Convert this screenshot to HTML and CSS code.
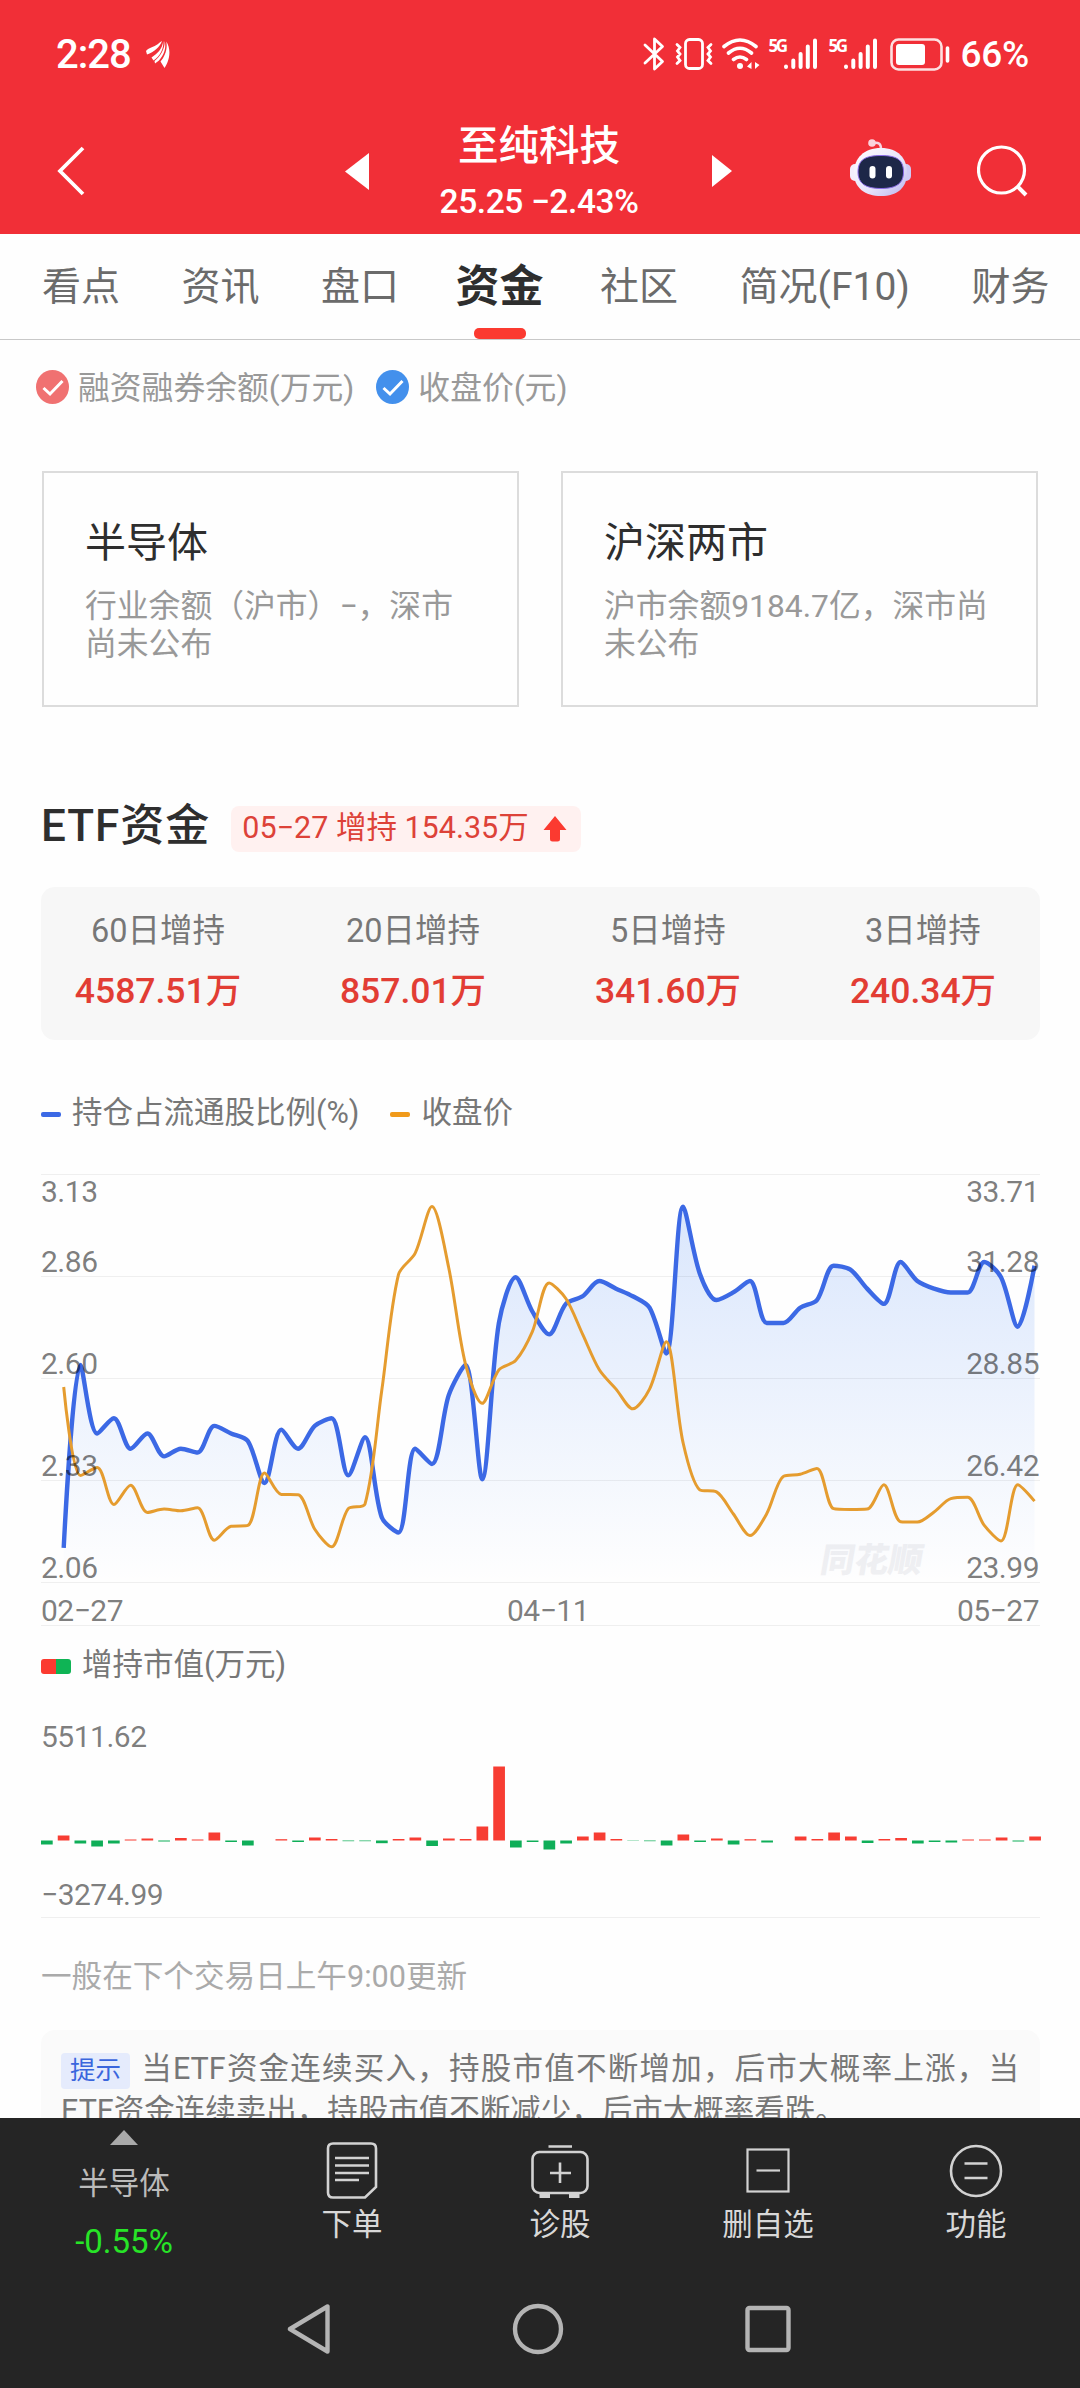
FILE: index.html
```
<!DOCTYPE html>
<html lang="zh-CN">
<head>
    <meta charset="UTF-8">
    <title>至纯科技 - 资金</title>
    <meta name="viewport" content="width=device-width, initial-scale=1.0">
    <link rel="stylesheet" href="styles.css">
</head>
<body>
    <div class="app">
        <header class="header">
            <!-- 系统状态栏 -->
            <div class="status-bar">
                <span class="time">2:28</span>
                <svg class="feather" width="24" height="29" viewBox="0 0 24 29" fill="#fff">
                    <path d="M0 11C2 8 8 7 12 4Q14 2 16 1C14 7 8 12 1 14.500Z"/>
                    <path d="M17.200 1C16.500 9 11 14 5.500 17.500L7.500 20.500C14 16 18 9 17.200 1Z"/>
                    <path d="M18.700 1C19 9 14 17 8.500 21L9 23.500L13 20.500C18 15 20.500 8 18.700 1Z"/>
                    <path d="M20.200 1.500C22 9 18.500 17 14.500 21.500L18.500 28C23 22 26 10 20.200 1.500Z"/>
                </svg>
                <div class="status-icons">
                    <svg width="22" height="34" viewBox="0 0 22 34" fill="none" stroke="#fff" stroke-width="2.800" stroke-linejoin="round" stroke-linecap="round">
                        <path d="M2 8L19.500 24.500L11.500 32V2L19.500 9.500L2 26"/>
                    </svg>
                    <svg class="vibrate" width="38" height="32" viewBox="0 0 38 32" fill="none" stroke="#fff" stroke-width="2.800" stroke-linecap="round">
                        <rect x="10.500" y="1.500" width="17" height="29" rx="4"/>
                        <path d="M2 6.500L5 9.500L2.500 13L5 16L2.500 19L5 22.500L2 25.500M36 6.500L33 9.500L35.500 13L33 16L35.500 19L33 22.500L36 25.500"/>
                    </svg>
                    <svg class="wifi" width="38" height="32" viewBox="0 0 38 32" fill="none" stroke="#fff" stroke-width="3.600" stroke-linecap="round">
                        <path d="M2 8.500Q18 -4.500 34 8.500M6.500 15Q18 5.500 29.500 15M11.500 21.500Q18 16.500 24.500 21.500"/>
                        <circle cx="18" cy="28" r="3" fill="#fff" stroke="none"/>
                        <path d="M29.500 24V31L25 28.500ZM33 24V31L37.500 27Z" fill="#fff" stroke="none"/>
                    </svg>
                    <span class="net">5G</span>
                    <svg class="signal" width="34" height="32" viewBox="0 0 34 32" stroke="#fff" stroke-width="4" stroke-linecap="round">
                        <path d="M2 28.500V29M9.300 22.500V29M16.600 16V29M23.800 8.500V29M31 2.500V29"/>
                    </svg>
                    <span class="net net2">5G</span>
                    <svg class="signal" width="34" height="32" viewBox="0 0 34 32" stroke="#fff" stroke-width="4" stroke-linecap="round">
                        <path d="M2 28.500V29M9.300 22.500V29M16.600 16V29M23.800 8.500V29M31 2.500V29"/>
                    </svg>
                    <svg class="battery" width="60" height="33" viewBox="0 0 60 33" fill="none" stroke="#fff">
                        <rect x="1.500" y="1.500" width="50" height="30" rx="7" stroke-width="2.600" opacity=".85"/>
                        <rect x="6" y="6" width="29" height="21" rx="3" fill="#fff" stroke="none"/>
                        <path d="M57.500 10V23" stroke-width="3.600" stroke-linecap="round"/>
                    </svg>
                    <span class="percent">66%</span>
                </div>
            </div>

            <!-- 股票标题栏 -->
            <div class="title-bar">
                <svg class="back" width="28" height="50" viewBox="0 0 28 50" fill="none" stroke="#fff" stroke-width="3.800">
                    <path d="M26 2L3 25L26 48"/>
                </svg>
                <svg class="prev" width="24" height="37" viewBox="0 0 24 37" fill="#fff"><path d="M24 0V37L0 18.500Z"/></svg>
                <div class="stock">
                    <div class="stock-name">至纯科技</div>
                    <div class="stock-price">25.25 −2.43%</div>
                </div>
                <svg class="next" width="20" height="32" viewBox="0 0 20 32" fill="#fff"><path d="M0 0V32L20 16Z"/></svg>
                <svg class="robot" width="62" height="58" viewBox="0 0 62 58">
                    <defs>
                        <linearGradient id="head" x1="0" y1="0" x2="1" y2="1">
                            <stop offset="0" stop-color="#fff"/>
                            <stop offset=".6" stop-color="#e6e2fa"/>
                            <stop offset="1" stop-color="#b9b4ee"/>
                        </linearGradient>
                    </defs>
                    <path d="M23 4C29 3 31 5 31 10" fill="none" stroke="#f6d5e2" stroke-width="2.500"/>
                    <circle cx="22" cy="4" r="3.800" fill="#fbd3dc"/>
                    <rect x="0" y="25" width="12" height="17" rx="5" fill="#f3eefc"/>
                    <rect x="49" y="25" width="12" height="17" rx="5" fill="#cfcaf5"/>
                    <path d="M31 9C48 9 57 19 57 34C57 49 47 57 31 57C15 57 4 49 4 34C4 19 14 9 31 9Z" fill="url(#head)"/>
                    <path d="M31 16.500C47 16.500 53.500 21 53.500 33C53.500 44 47 49.500 31 49.500C15 49.500 8 44 8 33C8 21 15 16.500 31 16.500Z" fill="#1d2748" stroke="#8a6be8" stroke-width="1"/>
                    <rect x="19.500" y="27" width="6" height="12.500" rx="3" fill="#fff"/>
                    <rect x="36" y="27" width="6" height="12.500" rx="3" fill="#fff"/>
                </svg>
                <svg class="search" width="52" height="52" viewBox="0 0 52 52" fill="none" stroke="#fff" stroke-width="3.200">
                    <circle cx="24.500" cy="25" r="23"/>
                    <path d="M40 41L49 50" stroke-width="4"/>
                </svg>
            </div>
        </header>

        <nav class="tabs">
            <div class="tab">看点</div>
            <div class="tab">资讯</div>
            <div class="tab">盘口</div>
            <div class="tab active">资金</div>
            <div class="tab">社区</div>
            <div class="tab">简况(F10)</div>
            <div class="tab">财务</div>
        </nav>

        <main class="content">
            <div class="check-legend">
                <svg width="33" height="34" viewBox="0 0 33 34"><ellipse cx="16.500" cy="17" rx="16.500" ry="17" fill="#f07171"/><path d="M7.500 18L14 24L26.500 11" fill="none" stroke="#fff" stroke-width="3"/></svg>
                <span>融资融券余额(万元)</span>
                <svg width="33" height="34" viewBox="0 0 33 34"><ellipse cx="16.500" cy="17" rx="16.500" ry="17" fill="#4390ec"/><path d="M7.500 18L14 24L26.500 11" fill="none" stroke="#fff" stroke-width="3"/></svg>
                <span>收盘价(元)</span>
            </div>

            <div class="cards">
                <div class="card">
                    <h3>半导体</h3>
                    <p>行业余额（沪市）−，深市尚未公布</p>
                </div>
                <div class="card">
                    <h3>沪深两市</h3>
                    <p>沪市余额9184.7亿，深市尚未公布</p>
                </div>
            </div>

            <!-- ETF资金 -->
            <div class="section-title">
                <h2>ETF资金</h2>
                <div class="badge">
                    <span>05−27 增持 154.35万</span>
                    <svg width="24" height="26" viewBox="0 0 24 26" fill="#fb3a30"><path d="M12 0L23.500 14H17V23Q17 25.500 14.500 25.500H9.500Q7 25.500 7 23V14H0.500Z"/></svg>
                </div>
            </div>

            <div class="summary">
                <div class="summary-item"><span>60日增持</span><b>4587.51万</b></div>
                <div class="summary-item"><span>20日增持</span><b>857.01万</b></div>
                <div class="summary-item"><span>5日增持</span><b>341.60万</b></div>
                <div class="summary-item"><span>3日增持</span><b>240.34万</b></div>
            </div>

            <div class="line-legend">
                <i class="dash blue"></i><span>持仓占流通股比例(%)</span>
                <i class="dash orange"></i><span>收盘价</span>
            </div>

            <svg class="line-chart" width="1080" height="480" viewBox="0 0 1080 480">
                <defs>
                    <linearGradient id="area" gradientUnits="userSpaceOnUse" x1="0" y1="55" x2="0" y2="432">
                        <stop offset="0" stop-color="#3f80f5" stop-opacity=".19"/>
                        <stop offset="1" stop-color="#3f80f5" stop-opacity="0"/>
                    </linearGradient>
                </defs>
                <text class="watermark" transform="translate(819 422) skewX(-10)">同花顺</text>
                <path id="ratio-area" fill="url(#area)"/>
                <path class="grid" d="M41 24.500H1040M41 126.500H1040M41 228.500H1040M41 330.500H1040M41 432.500H1040M41 475.500H1040"/>
                <path id="ratio-line" fill="none" stroke="#3c69e5" stroke-width="4.400" stroke-linejoin="bevel"/>
                <path id="price-line" fill="none" stroke="#e59c2f" stroke-width="3" stroke-linejoin="bevel"/>
                <g class="axis">
                    <text x="41" y="52">3.13</text>
                    <text x="41" y="122">2.86</text>
                    <text x="41" y="224">2.60</text>
                    <text x="41" y="326">2.33</text>
                    <text x="41" y="428">2.06</text>
                    <text x="41" y="471">02−27</text>
                </g>
                <g class="axis" text-anchor="end">
                    <text x="1039" y="52">33.71</text>
                    <text x="1039" y="122">31.28</text>
                    <text x="1039" y="224">28.85</text>
                    <text x="1039" y="326">26.42</text>
                    <text x="1039" y="428">23.99</text>
                    <text x="1039" y="471">05−27</text>
                </g>
                <text class="axis" x="548" y="471" text-anchor="middle">04−11</text>
            </svg>

            <div class="line-legend value-legend">
                <i class="box"></i><span>增持市值(万元)</span>
            </div>

            <svg class="bar-chart" width="1080" height="220" viewBox="0 0 1080 220">
                <g id="bars"></g>
                <path class="grid" d="M41 217.500H1040"/>
                <text class="axis" x="41" y="47">5511.62</text>
                <text class="axis" x="41" y="205">−3274.99</text>
            </svg>

            <p class="note">一般在下个交易日上午9:00更新</p>

            <div class="tip"><span class="tip-tag">提示</span>当ETF资金连续买入，持股市值不断增加，后市大概率上涨，当ETF资金连续卖出，持股市值不断减少，后市大概率看跌。</div>
        </main>

        <footer class="footer">
            <div class="toolbar">
                <div class="sector">
                    <svg width="28" height="15" viewBox="0 0 28 15" fill="#aaa"><path d="M14 0L28 15H0Z"/></svg>
                    <span>半导体</span>
                    <em>-0.55%</em>
                </div>
                <div class="tool">
                    <svg width="60" height="60" viewBox="0 0 60 60" fill="none" stroke="#d2d2d2" stroke-width="2.600">
                        <path d="M11 3.500H49Q54 3.500 54 8.500V47L43 57.500H11Q6 57.500 6 52.500V8.500Q6 3.500 11 3.500Z"/>
                        <path d="M13 18H47M13 25.500H47M13 33H47M13 40H37"/>
                    </svg>
                    <span>下单</span>
                </div>
                <div class="tool">
                    <svg width="60" height="60" viewBox="0 0 60 60" fill="none" stroke="#d2d2d2" stroke-width="2.600">
                        <rect x="2.500" y="12" width="55" height="41" rx="7"/>
                        <path d="M18.500 6.500H42M30 22.500V43M20 33H41"/>
                        <path d="M9.500 56H20M39 56H49.500" stroke-width="4"/>
                    </svg>
                    <span>诊股</span>
                </div>
                <div class="tool">
                    <svg width="60" height="60" viewBox="0 0 60 60" fill="none" stroke="#d2d2d2" stroke-width="2.200">
                        <rect x="9.500" y="9.500" width="41" height="42"/>
                        <path d="M18.500 30.500H42"/>
                    </svg>
                    <span>删自选</span>
                </div>
                <div class="tool">
                    <svg width="60" height="60" viewBox="0 0 60 60" fill="none" stroke="#d2d2d2" stroke-width="2.600">
                        <circle cx="30" cy="31" r="25"/>
                        <path d="M18.500 23.500H41.500M18.500 38H41.500"/>
                    </svg>
                    <span>功能</span>
                </div>
            </div>

            <!-- 系统导航键 -->
            <div class="nav-keys">
                <svg width="44" height="52" viewBox="0 0 44 52" fill="none" stroke="#b4b4b4" stroke-width="4.400" stroke-linejoin="round"><path d="M40.500 3.500V48.500L3 26Z"/></svg>
                <svg width="52" height="52" viewBox="0 0 52 52" fill="none" stroke="#b4b4b4" stroke-width="4.400"><circle cx="26" cy="26" r="23"/></svg>
                <svg width="46" height="48" viewBox="0 0 46 48" fill="none" stroke="#b4b4b4" stroke-width="4.400"><rect x="2.500" y="3" width="41" height="42" rx="2"/></svg>
            </div>
        </footer>
    </div>

    <script>
        // 持仓占流通股比例(%)
        const ratio = [2.15, 2.63, 2.45, 2.49, 2.41, 2.45, 2.39, 2.41, 2.40, 2.47, 2.45, 2.43, 2.32, 2.46, 2.41,
            2.47, 2.49, 2.34, 2.44, 2.23, 2.19, 2.41, 2.37, 2.55, 2.63, 2.33, 2.74, 2.86, 2.77, 2.71,
            2.79, 2.81, 2.85, 2.83, 2.81, 2.78, 2.66, 3.045, 2.87, 2.80, 2.82, 2.85, 2.74, 2.74, 2.78,
            2.80, 2.89, 2.88, 2.83, 2.79, 2.90, 2.85, 2.83, 2.82, 2.82, 2.90, 2.86, 2.73, 2.89];
        // 收盘价
        const price = [28.64, 26.53, 26.72, 25.84, 26.30, 25.65, 25.73, 25.69, 25.76, 24.99, 25.32, 25.34, 26.59, 26.08, 26.07,
            25.25, 24.83, 25.74, 25.85, 28.55, 31.32, 31.83, 32.94, 31.49, 29.19, 28.25, 29.05, 29.27, 29.96, 31.12,
            30.75, 29.90, 29.05, 28.59, 28.12, 28.59, 29.72, 27.32, 26.19, 26.14, 25.62, 25.10, 25.62, 26.51, 26.56,
            26.70, 25.74, 25.72, 25.73, 26.31, 25.43, 25.42, 25.66, 25.98, 26.01, 25.34, 24.97, 26.31, 25.92];
        // 增持市值柱高
        const values = [-4, 5, -3, -6, -3, 1, 2, -1, 2.5, 1, 8, -1.5, -5, 0, 1.3, -1.5, 3, 1.5, -0.7, -0.7,
            -2.7, 1.5, 3, -5.5, 2, 1.5, 14, 74, -7, -1.5, -9, -3, 4, 8, 1.5, -0.3, -0.7, -5, 6, -1.5,
            2, -4, 1.3, -2, 0, 4, 1.5, 8, 4, -2.5, 1.5, 2.5, -3, -1.5, -2, 1, 1, 3, -1, 4];

        function toPoints(data, min, max) {
            return data.map((v, i) => [63.7 + i * 16.738, 432.1 - (v - min) / (max - min) * 407.8]);
        }

        function clamp(v, a, b) {
            return Math.max(Math.min(a, b), Math.min(Math.max(a, b), v));
        }

        // 平滑曲线，控制点限制在相邻两点之间
        function smoothPath(pts) {
            let d = `M${pts[0]}`;
            let cp = pts[0];
            for (let i = 1; i < pts.length; i++) {
                const prev = pts[i - 1], p = pts[i], next = pts[i + 1];
                let before = p, after = p;
                if (next) {
                    const d0 = Math.hypot(p[0] - prev[0], p[1] - prev[1]);
                    const d1 = Math.hypot(next[0] - p[0], next[1] - p[1]);
                    const r = d1 / (d0 + d1);
                    after = p.map((v, k) => clamp(v + (next[k] - prev[k]) * 0.3 * r, v, next[k]));
                    before = p.map((v, k) => clamp(v - (after[k] - v) * d0 / d1, v, prev[k]));
                    after = p.map((v, k) => v + (v - before[k]) * d1 / d0);
                }
                d += `C${cp} ${before} ${p}`;
                cp = after;
            }
            return d;
        }

        const ratioPath = smoothPath(toPoints(ratio, 2.06, 3.13));
        document.getElementById('ratio-line').setAttribute('d', ratioPath);
        document.getElementById('ratio-area').setAttribute('d', ratioPath + 'V432H63.7Z');
        document.getElementById('price-line').setAttribute('d', smoothPath(toPoints(price, 23.99, 33.71)));

        document.getElementById('bars').innerHTML = values.map((v, i) => {
            const y = v > 0 ? 140.5 - v : 140.5;
            return `<rect x="${41 + i * 16.75}" y="${y}" width="11.7" height="${Math.abs(v)}" fill="${v > 0 ? '#f73d33' : '#0fae58'}"/>`;
        }).join('');
    </script>
</body>
</html>
```

FILE: styles.css
```
* {
    margin: 0;
    padding: 0;
    box-sizing: border-box;
}

body {
    width: 1080px;
    font-family: Roboto, 'Noto Sans CJK SC', sans-serif;
    background: #fefefe;
    color: #777;
}

svg {
    display: block;
    flex: none;
}

.app {
    height: 2388px;
    display: flex;
    flex-direction: column;
    overflow: hidden;
}

.header {
    background: #f12f37;
    color: white;
    height: 234px;
    flex: none;
}

.status-bar {
    height: 108px;
    display: flex;
    align-items: center;
    padding: 0 51px 0 56px;
}

.time {
    font-size: 40px;
    font-weight: 500;
    letter-spacing: -1px;
}

.feather {
    margin-left: 15px;
}

.status-icons {
    margin-left: auto;
    display: flex;
    align-items: center;
}

.vibrate {
    margin-left: 10px;
}

.wifi {
    margin-left: 9px;
}

.net {
    width: 16px;
    margin: -16px 0 0 9px;
    font-family: 'Open Sans', Roboto, sans-serif;
    font-size: 17px;
    font-weight: 700;
    line-height: 16px;
    letter-spacing: -2.5px;
    white-space: nowrap;
}

.net2 {
    margin-left: 11px;
}

.signal {
    margin-left: -1px;
}

.battery {
    margin-left: 12px;
}

.percent {
    margin-left: 11px;
    font-size: 37px;
    font-weight: 500;
    letter-spacing: -0.3px;
}

.title-bar {
    height: 126px;
    display: flex;
    align-items: center;
    padding: 0 51px 0 57px;
}

.back {
    margin-right: 260px;
}

.stock {
    flex: 1;
    padding-right: 3px;
    text-align: center;
    white-space: nowrap;
}

.stock-name {
    font-size: 40.5px;
    font-weight: 500;
    line-height: 56px;
}

.stock-price {
    font-size: 33.5px;
    font-weight: 500;
    line-height: 44px;
    margin-top: 6px;
    letter-spacing: -0.4px;
}

.robot {
    margin-left: 118px;
    margin-top: -6px;
}

.search {
    margin-left: 65px;
}

.tabs {
    height: 106px;
    flex: none;
    display: flex;
    gap: 61.5px;
    padding-left: 42px;
    border-bottom: 1px solid #c8c8c8;
    line-height: 107px;
    font-size: 39px;
    color: #6b6b6b;
    white-space: nowrap;
}

.tab.active {
    position: relative;
    margin: 0 -5px;
    font-size: 44px;
    font-weight: 700;
    color: #2e2e2e;
}

.tab.active::after {
    content: '';
    position: absolute;
    left: 18px;
    bottom: 0;
    width: 52px;
    height: 11px;
    border-radius: 5px;
    background: #fb3a30;
}

.content {
    flex: 1;
    min-height: 0;
    overflow: hidden;
}

.check-legend {
    margin: 30px 0 0 36px;
    height: 34px;
    display: flex;
    align-items: center;
    font-size: 31.8px;
    line-height: 34px;
    color: #999;
}

.check-legend span {
    margin: 2px 22px 0 9px;
}

.cards {
    margin: 67px 42px 0;
    display: grid;
    grid-template-columns: 1fr 1fr;
    gap: 42px;
}

.card {
    height: 236px;
    border: 2px solid #dcdcdc;
    padding: 41px 46px 0 41px;
}

.card h3 {
    font-size: 41px;
    font-weight: 400;
    line-height: 58px;
    color: #2e2e2e;
}

.card p {
    margin-top: 15px;
    font-size: 31.8px;
    line-height: 38px;
    color: #999;
}

.section-title {
    margin: 89px 0 0 41px;
    height: 60px;
    display: flex;
    align-items: center;
}

.section-title h2 {
    font-size: 44px;
    font-weight: 500;
    line-height: 62px;
    letter-spacing: 1px;
    color: #2e2e2e;
}

.badge {
    margin: 5px 0 0 21px;
    height: 46px;
    padding: 0 14px 0 11px;
    border-radius: 8px;
    background: #fff1f0;
    color: #dd4238;
    font-size: 30.5px;
    line-height: 44px;
    display: flex;
    align-items: center;
    gap: 14px;
}

.badge span {
    margin-top: -1px;
}

.summary {
    margin: 31px 40px 0 41px;
    height: 153px;
    padding-top: 22px;
    border-radius: 14px;
    background: #f7f7f7;
    display: grid;
    grid-template-columns: repeat(4, 255px);
    justify-content: center;
    text-align: center;
}

.summary-item span {
    display: block;
    font-size: 32.5px;
    line-height: 44px;
}

.summary-item b {
    display: block;
    margin-top: 16px;
    font-size: 35.5px;
    font-weight: 500;
    line-height: 44px;
    color: #e23d34;
}

.line-legend {
    margin: 52px 0 0 41px;
    height: 40px;
    display: flex;
    align-items: center;
    font-size: 30.5px;
    line-height: 40px;
}

.line-legend span {
    margin-top: 1px;
}

.dash {
    width: 20px;
    height: 5px;
    border-radius: 2px;
    margin: 4px 11px 0 0;
}

.blue {
    background: #3c69e5;
}

.orange {
    background: #f09a1a;
    margin-left: 31px;
}

.line-chart {
    margin-top: 18px;
}

.grid {
    stroke: rgba(0, 0, 0, 0.06);
    stroke-width: 1;
}

.axis {
    font-size: 30px;
    fill: rgba(0, 0, 0, 0.52);
    letter-spacing: -0.5px;
}

.watermark {
    font-size: 34px;
    font-weight: 900;
    fill: #f0f0f2;
}

.value-legend {
    margin-top: 14px;
}

.box {
    width: 30px;
    height: 15px;
    border-radius: 3px;
    margin: 4px 11px 0 0;
    background: linear-gradient(90deg, #fb3a30 50%, #0fb455 50%);
}

.bar-chart {
    margin-top: 16px;
}

.note {
    margin: 37px 0 0 41px;
    font-size: 30.6px;
    line-height: 40px;
    color: #aaa;
}

.tip {
    margin: 33px 40px 0 41px;
    height: 200px;
    padding: 18px 21px 0 20px;
    border-radius: 14px;
    background: #fafafa;
    font-size: 30.5px;
    line-height: 42px;
    text-align: justify;
}

.tip-tag {
    display: inline-block;
    height: 36px;
    width: 69px;
    margin-right: 10px;
    border-radius: 4px;
    background: #e5ebfc;
    color: #3a66dd;
    font-size: 25.5px;
    line-height: 34px;
    text-align: center;
    text-align-last: center;
}

.footer {
    height: 270px;
    flex: none;
    background: #252525;
}

.toolbar {
    height: 160px;
    display: flex;
    font-size: 30.5px;
    line-height: 42px;
    color: #d8d8d8;
}

.sector {
    width: 248px;
    padding-top: 12px;
    display: flex;
    flex-direction: column;
    align-items: center;
    color: #bbb;
}

.sector span {
    margin-top: 18px;
}

.sector em {
    margin-top: 16px;
    font-size: 33px;
    font-style: normal;
    color: #27e427;
}

.tool {
    width: 208px;
    padding-top: 22px;
    display: flex;
    flex-direction: column;
    align-items: center;
}

.tool span {
    margin-top: 4px;
}

.nav-keys {
    height: 102px;
    display: flex;
    align-items: center;
    justify-content: center;
    gap: 181px;
    margin-left: -2px;
}
```
